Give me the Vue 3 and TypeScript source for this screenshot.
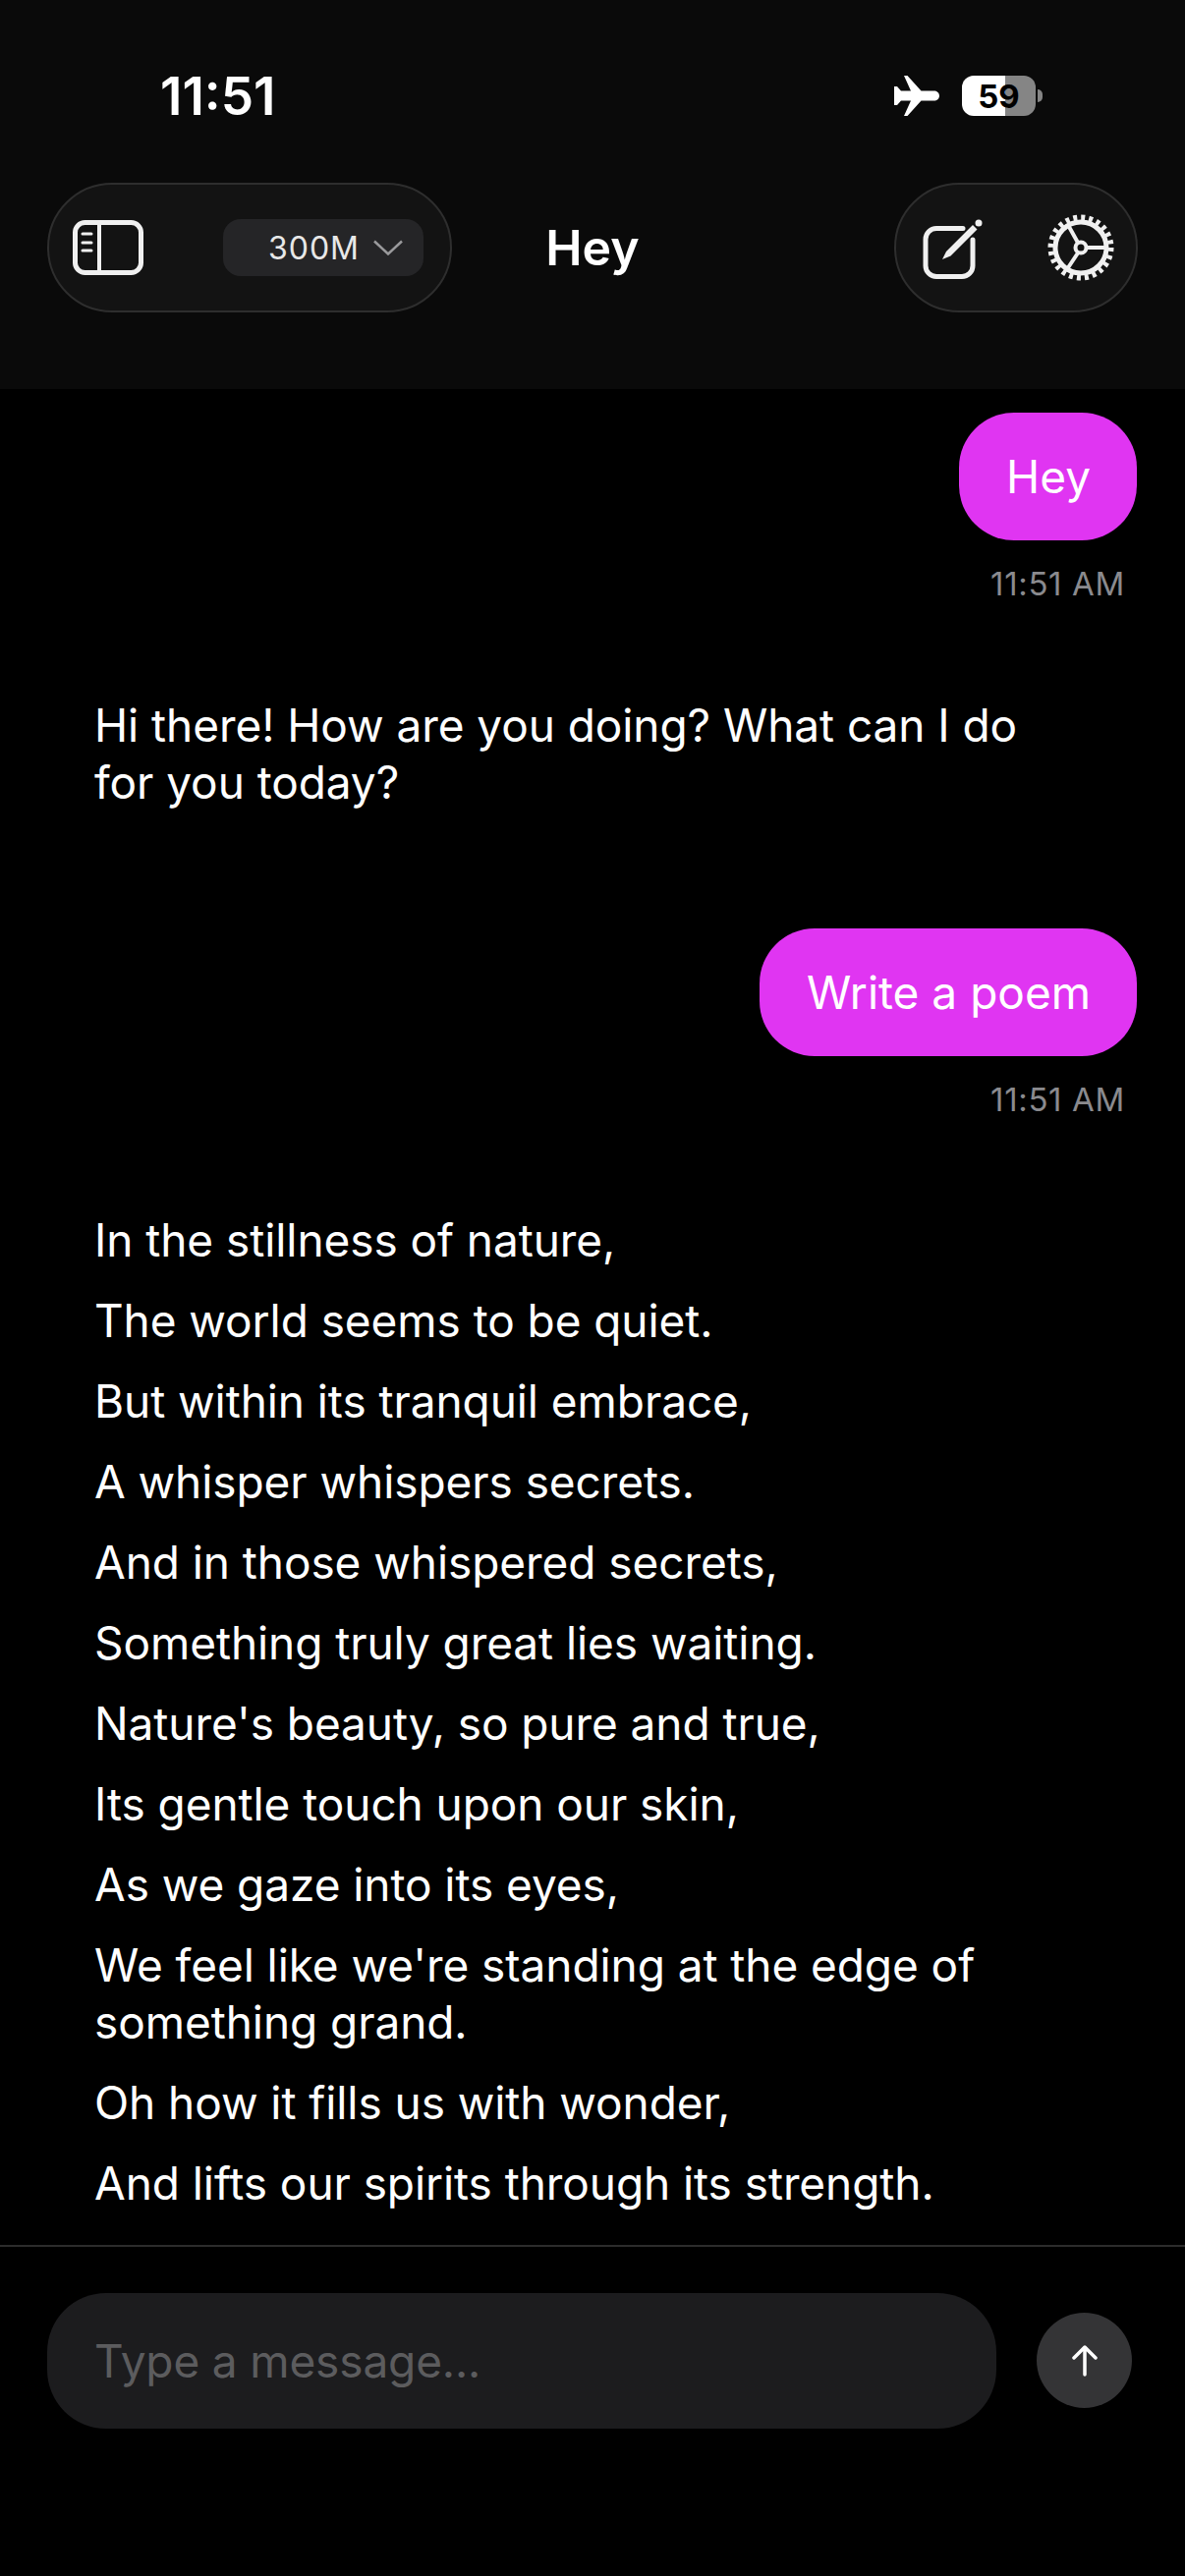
<script setup lang="ts">
const poem: string[] = [
  'In the stillness of nature,',
  'The world seems to be quiet.',
  'But within its tranquil embrace,',
  'A whisper whispers secrets.',
  'And in those whispered secrets,',
  'Something truly great lies waiting.',
  "Nature's beauty, so pure and true,",
  'Its gentle touch upon our skin,',
  'As we gaze into its eyes,',
  "We feel like we're standing at the edge of something grand.",
  'Oh how it fills us with wonder,',
  'And lifts our spirits through its strength.',
]
</script>

<template>
  <div class="screen">
    <header class="top">
      <div class="status">
        <span class="clock">11:51</span>
        <div class="status-right">
          <svg class="plane" viewBox="0 0 46 41" width="46" height="41">
            <path fill="#fff" d="M10 0h3.500l14 15.500h13C43.500 15.500 46 17.500 46 20.500s-2.500 5-5.500 5h-13L13.500 41H10l7-15.500H7L3 30H0V11h3l4 4.500h10z" />
          </svg>
          <div class="battery">
            <div class="battery-body"><span>59</span></div>
            <i class="battery-nub"></i>
          </div>
        </div>
      </div>
      <div class="toolbar">
        <div class="pill pill-left">
          <svg viewBox="0 0 72 56" width="72" height="56" fill="none" stroke="#f0f0f0">
            <rect x="2.500" y="2.500" width="67" height="51" rx="10" stroke-width="5" />
            <path d="M27 3v50" stroke-width="4" />
            <path d="M10 14h9M10 23h9M10 31h9" stroke-width="3" stroke-linecap="round" />
          </svg>
          <div class="model">
            <span>300M</span>
            <svg viewBox="0 0 30 16" width="30" height="16" fill="none" stroke="#9a9a9c" stroke-width="2.500">
              <path d="M1 1.500l14 13 14-13" />
            </svg>
          </div>
        </div>
        <h1 class="title">Hey</h1>
        <div class="pill pill-right">
          <svg viewBox="0 0 62 66" width="62" height="66" fill="none" stroke="#f0f0f0">
            <path d="M41 13.500H14a11 11 0 0 0-11 11v27a11 11 0 0 0 11 11h26a11 11 0 0 0 11-11V25" stroke-width="5" stroke-linecap="round" />
            <path fill="#f0f0f0" stroke="none" d="M20 45l4-8 27-27 4.500 4.500-27 27z" />
            <circle cx="57" cy="8" r="3.500" fill="#f0f0f0" stroke="none" />
          </svg>
          <svg viewBox="0 0 68 68" width="68" height="68" fill="none" stroke="#f0f0f0">
            <circle cx="34" cy="34" r="26" stroke-width="5" />
            <circle cx="34" cy="34" r="30.500" stroke-width="6" stroke-dasharray="4 3.985" />
            <circle cx="34" cy="34" r="5.500" stroke-width="4" />
            <path d="M40 34h20M31 29L21 11M31 39.500L20 56" stroke-width="4" />
          </svg>
        </div>
      </div>
    </header>

    <main class="chat">
      <div class="sent">
        <div class="bubble">Hey</div>
        <time class="stamp">11:51 AM</time>
      </div>
      <p class="reply reply-first">Hi there! How are you doing? What can I do for you today?</p>
      <div class="sent">
        <div class="bubble">Write a poem</div>
        <time class="stamp">11:51 AM</time>
      </div>
      <div class="poem">
        <p v-for="line in poem" :key="line" class="reply">{{ line }}</p>
      </div>
    </main>

    <footer class="composer">
      <div class="field">Type a message...</div>
      <button class="send" type="button" aria-label="Send">
        <svg viewBox="0 0 28 32" width="28" height="32" fill="none" stroke="#fff" stroke-width="3.500" stroke-linecap="round" stroke-linejoin="round">
          <path d="M14 30V3M3 13L14 2l11 11" />
        </svg>
      </button>
    </footer>
  </div>
</template>

<style scoped>
.screen {
  width: 1206px;
  height: 2622px;
  display: flex;
  flex-direction: column;
  overflow: hidden;
  background: #000;
  color: #fff;
  font-family: Inter, "Liberation Sans", sans-serif;
}

.top {
  height: 396px;
  flex: none;
  background: #0a0a0a;
  box-sizing: border-box;
  padding: 0 48px;
}

.status {
  height: 186px;
  display: flex;
  justify-content: space-between;
  align-items: flex-start;
}

.clock {
  margin: 66px 0 0 115px;
  font-size: 53px;
  line-height: 64px;
  font-weight: 600;
}

.status-right {
  display: flex;
  align-items: center;
  gap: 23px;
  margin: 77px 97px 0 0;
}

.battery {
  display: flex;
  align-items: center;
  gap: 2px;
}

.battery-body {
  width: 75px;
  height: 41px;
  border-radius: 12px;
  background: linear-gradient(90deg, #fff 0 44px, #858585 44px);
  display: flex;
  align-items: center;
  justify-content: center;
  color: #000;
  font-size: 33px;
  font-weight: 700;
}

.battery-nub {
  width: 5px;
  height: 13px;
  border-radius: 0 6px 6px 0;
  background: #858585;
}

.toolbar {
  height: 132px;
  display: flex;
  justify-content: space-between;
  align-items: center;
  position: relative;
}

.pill {
  height: 132px;
  box-sizing: border-box;
  display: flex;
  align-items: center;
  background: #131313;
  border: 2px solid #2e2e2e;
  border-radius: 66px;
}

.pill-left {
  width: 412px;
  padding: 0 27px 0 24px;
  justify-content: space-between;
}

.pill-right {
  width: 248px;
  padding: 0 22px 0 27px;
  justify-content: space-between;
}

.model {
  width: 204px;
  height: 58px;
  box-sizing: border-box;
  border-radius: 18px;
  background: #252527;
  display: flex;
  align-items: center;
  justify-content: flex-end;
  gap: 14px;
  padding-right: 21px;
  font-size: 32px;
  letter-spacing: 1px;
  color: #e8e8e8;
}

.title {
  margin: 0;
  position: absolute;
  left: 50%;
  top: 50%;
  transform: translate(-50%, -50%);
  font-size: 50px;
  font-weight: 600;
}

.chat {
  flex: 1;
  min-height: 0;
  padding: 24px 49px 0 96px;
}

.sent {
  display: flex;
  flex-direction: column;
  align-items: flex-end;
}

.bubble {
  height: 130px;
  box-sizing: border-box;
  display: flex;
  align-items: center;
  padding: 0 47px 0 48px;
  border-radius: 56px;
  background: #e035f2;
  font-size: 46px;
}

.stamp {
  margin: 25px 12px 0 0;
  font-size: 33px;
  line-height: 38px;
  letter-spacing: 0.65px;
  color: #8a8a8e;
}

.reply {
  margin: 0;
  font-size: 46px;
  line-height: 58px;
  letter-spacing: -0.07px;
  max-width: 960px;
}

.reply-first {
  margin: 96px 0 120px;
}

.poem {
  margin-top: 95px;
  display: flex;
  flex-direction: column;
  gap: 24px;
}

.composer {
  height: 337px;
  flex: none;
  box-sizing: border-box;
  border-top: 2px solid #2c2c2c;
  padding: 47px 54px 0 48px;
  display: flex;
  align-items: flex-start;
  justify-content: space-between;
}

.field {
  width: 966px;
  height: 138px;
  box-sizing: border-box;
  display: flex;
  align-items: center;
  padding-left: 48px;
  border-radius: 60px;
  background: #1c1c1e;
  color: #5c5c5e;
  font-size: 46px;
  letter-spacing: -0.15px;
}

.send {
  width: 97px;
  height: 97px;
  margin-top: 20px;
  padding: 0;
  border: none;
  border-radius: 50%;
  background: #343436;
  display: flex;
  align-items: center;
  justify-content: center;
}
</style>

<style>
html,
body {
  background: #000;
}
</style>
